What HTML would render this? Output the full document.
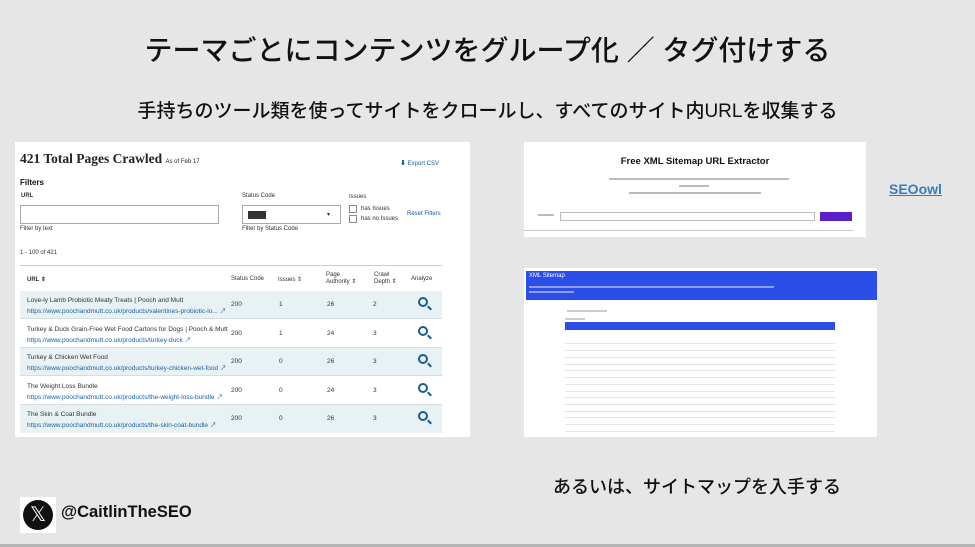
<!DOCTYPE html>
<html><head><meta charset="utf-8"><style>
*{margin:0;padding:0;box-sizing:border-box}
body{width:975px;height:547px;background:#e6e6e6;font-family:"Liberation Sans","Noto Sans CJK JP",sans-serif;position:relative;overflow:hidden;color:#111}
.a{position:absolute}
.t1{left:0;width:975px;top:29px;text-align:center;font-size:28px;font-weight:500}
.t2{left:0;width:975px;top:96px;text-align:center;font-size:19px;font-weight:500}
.p{background:#fff}
.s{font-size:6px;color:#333}
.row{position:absolute;left:20px;width:450px;height:28px;border-bottom:1px solid #d5dde0;font-size:6.5px;color:#333}
.row .l1{position:absolute;left:7px;top:6px}
.row .l2{position:absolute;left:7px;top:14px;color:#1b5fa8}
.row span.c{position:absolute;top:10px}
.q{position:absolute;left:398px;top:6px;width:10px;height:10px;border:2px solid #1a5d8f;border-radius:50%}
.q:after{content:"";position:absolute;left:7px;top:8px;width:5px;height:2px;background:#1a5d8f;transform:rotate(45deg)}
.sl{position:absolute;left:565px;width:270px;height:1px;background:#e4e4e4}
</style></head><body>
<div class="a t1">テーマごとにコンテンツをグループ化 ／ タグ付けする</div>
<div class="a t2">手持ちのツール類を使ってサイトをクロールし、すべてのサイト内URLを収集する</div>

<div class="a p" style="left:15px;top:142px;width:455px;height:295px">
 <div class="a" style="left:5px;top:9px;font-family:'Liberation Serif',serif;font-weight:bold;font-size:13.5px;color:#222">421 Total Pages Crawled <span style="font-size:6px;font-weight:normal;font-family:'Liberation Sans'">As of Feb 17</span></div>
 <div class="a s" style="left:385px;top:16px;color:#1b5fa8">⬇ Export CSV</div>
 <div class="a" style="left:5px;top:36px;font-size:8px;font-weight:bold">Filters</div>
 <div class="a s" style="left:6px;top:51px;font-weight:bold">URL</div>
 <div class="a" style="left:5px;top:63px;width:199px;height:19px;border:1px solid #aaa"></div>
 <div class="a s" style="left:5px;top:84px">Filter by text</div>
 <div class="a s" style="left:227px;top:51px">Status Code</div>
 <div class="a" style="left:227px;top:63px;width:99px;height:19px;border:1px solid #aaa"><div class="a" style="left:5px;top:5px;width:18px;height:8px;background:#333"></div><div class="a s" style="left:84px;top:5px">▾</div></div>
 <div class="a s" style="left:227px;top:84px">Filter by Status Code</div>
 <div class="a s" style="left:334px;top:52px">Issues</div>
 <div class="a" style="left:334px;top:63px;width:8px;height:8px;border:1px solid #888"></div><div class="a s" style="left:346px;top:64px">has Issues</div>
 <div class="a" style="left:334px;top:73px;width:8px;height:8px;border:1px solid #888"></div><div class="a s" style="left:346px;top:74px">has no Issues</div>
 <div class="a s" style="left:392px;top:69px;color:#1b5fa8">Reset Filters</div>
 <div class="a s" style="left:5px;top:108px">1 - 100 of 421</div>
 <div class="a" style="left:5px;top:123px;width:422px;height:1px;background:#ccc"></div>
 <div class="a s" style="left:12px;top:134px;font-weight:bold">URL ⇕</div>
 <div class="a s" style="left:216px;top:134px">Status Code</div>
 <div class="a s" style="left:263px;top:134px">Issues ⇕</div>
 <div class="a s" style="left:311px;top:130px">Page<br>Authority ⇕</div>
 <div class="a s" style="left:359px;top:130px">Crawl<br>Depth ⇕</div>
 <div class="a s" style="left:396px;top:134px">Analyze</div>
</div>
<div class="row" style="top:291px;background:#e8f1f4;left:20px;width:422px"><div class="l1">Love-ly Lamb Probiotic Meaty Treats | Pooch and Mutt</div><div class="l2">https://www.poochandmutt.co.uk/products/valentines-probiotic-lo... ↗</div><span class="c" style="left:211px">200</span><span class="c" style="left:259px">1</span><span class="c" style="left:307px">26</span><span class="c" style="left:353px">2</span><div class="q"></div></div>
<div class="row" style="top:320px;width:422px"><div class="l1">Turkey &amp; Duck Grain-Free Wet Food Cartons for Dogs | Pooch &amp; Mutt</div><div class="l2">https://www.poochandmutt.co.uk/products/turkey-duck ↗</div><span class="c" style="left:211px">200</span><span class="c" style="left:259px">1</span><span class="c" style="left:307px">24</span><span class="c" style="left:353px">3</span><div class="q"></div></div>
<div class="row" style="top:348px;background:#e8f1f4;width:422px"><div class="l1">Turkey &amp; Chicken Wet Food</div><div class="l2">https://www.poochandmutt.co.uk/products/turkey-chicken-wet-food ↗</div><span class="c" style="left:211px">200</span><span class="c" style="left:259px">0</span><span class="c" style="left:307px">26</span><span class="c" style="left:353px">3</span><div class="q"></div></div>
<div class="row" style="top:377px;width:422px"><div class="l1">The Weight Loss Bundle</div><div class="l2">https://www.poochandmutt.co.uk/products/the-weight-loss-bundle ↗</div><span class="c" style="left:211px">200</span><span class="c" style="left:259px">0</span><span class="c" style="left:307px">24</span><span class="c" style="left:353px">3</span><div class="q"></div></div>
<div class="row" style="top:405px;background:#e8f1f4;width:422px;border:none"><div class="l1">The Skin &amp; Coat Bundle</div><div class="l2">https://www.poochandmutt.co.uk/products/the-skin-coat-bundle ↗</div><span class="c" style="left:211px">200</span><span class="c" style="left:259px">0</span><span class="c" style="left:307px">26</span><span class="c" style="left:353px">3</span><div class="q"></div></div>

<div class="a p" style="left:524px;top:142px;width:342px;height:95px">
 <div class="a" style="left:0;width:342px;top:14px;text-align:center;font-weight:bold;font-size:9.5px">Free XML Sitemap URL Extractor</div>
 <div class="a" style="left:85px;top:36px;width:180px;height:2px;background:#bbb"></div>
 <div class="a" style="left:155px;top:43px;width:30px;height:2px;background:#bbb"></div>
 <div class="a" style="left:105px;top:50px;width:132px;height:2px;background:#bbb"></div>
 <div class="a" style="left:14px;top:72px;width:16px;height:2px;background:#bbb"></div>
 <div class="a" style="left:36px;top:70px;width:255px;height:9px;border:1px solid #bbb"></div>
 <div class="a" style="left:296px;top:70px;width:32px;height:9px;background:#5a1fc9"></div>
 <div class="a" style="left:0;top:88px;width:330px;height:1px;background:#ccc"></div>
</div>
<div class="a" style="left:889px;top:181px;font-size:14px;font-weight:bold;color:#3a7bc0;text-decoration:underline">SEOowl</div>

<div class="a p" style="left:524px;top:268px;width:353px;height:169px">
 <div class="a" style="left:2px;top:3px;width:351px;height:29px;background:#2b4de8"><div class="a" style="left:3px;top:2px;color:#fff;font-size:6px">XML Sitemap</div><div class="a" style="left:3px;top:15px;width:245px;height:2px;background:#8fa0f0"></div><div class="a" style="left:3px;top:20px;width:45px;height:2px;background:#8fa0f0"></div></div>
 <div class="a" style="left:43px;top:42px;width:40px;height:2px;background:#ccc"></div>
 <div class="a" style="left:41px;top:50px;width:20px;height:2px;background:#ccc"></div>
 <div class="a" style="left:41px;top:54px;width:270px;height:8px;background:#2b4de8"></div>
</div>
<div class="sl" style="top:343px"></div><div class="sl" style="top:350px"></div><div class="sl" style="top:357px"></div><div class="sl" style="top:364px"></div><div class="sl" style="top:370px"></div><div class="sl" style="top:377px"></div><div class="sl" style="top:384px"></div><div class="sl" style="top:391px"></div><div class="sl" style="top:397px"></div><div class="sl" style="top:404px"></div><div class="sl" style="top:411px"></div><div class="sl" style="top:417px"></div><div class="sl" style="top:424px"></div><div class="sl" style="top:431px"></div>

<div class="a" style="left:553px;top:473px;font-size:18px;font-weight:500">あるいは、サイトマップを入手する</div>

<div class="a" style="left:20px;top:497px;width:36px;height:36px;background:#fff"><div class="a" style="left:3px;top:3px;width:30px;height:30px;border-radius:50%;background:#111;color:#fff;text-align:center;line-height:30px;font-size:20px">𝕏</div></div>
<div class="a" style="left:61px;top:503px;font-size:16.5px;font-weight:bold;color:#111">@CaitlinTheSEO</div>
<div class="a" style="left:0;top:544px;width:975px;height:3px;background:#b5b5b5"></div>
</body></html>
